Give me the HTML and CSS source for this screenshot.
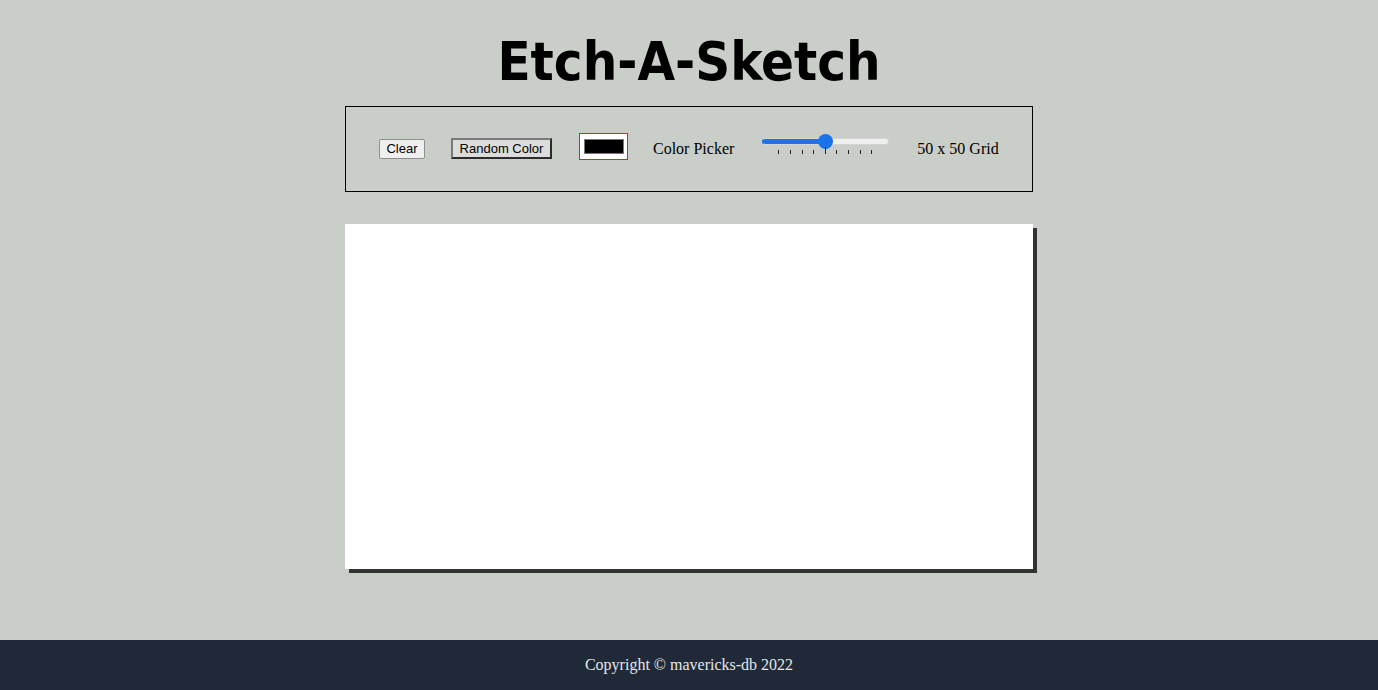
FILE: index.html
```html
<!DOCTYPE html>
<html lang="en">
<head>
<meta charset="utf-8">
<title>Etch-A-Sketch</title>
<link rel="stylesheet" href="styles.css">
</head>
<body>
<main class="page">
  <h1 class="title">Etch-A-Sketch</h1>
  <section class="controls">
    <button class="btn btn-clear" type="button">Clear</button>
    <button class="btn btn-random" type="button">Random Color</button>
    <span class="color-frame"><input class="color-input" type="color" value="#000000" aria-label="Color Picker"></span>
    <span class="label">Color Picker</span>
    <div class="slider">
      <input class="range" type="range" min="1" max="100" value="50" style="--fill: 50%" aria-label="Grid size">
      <div class="ticks">
        <span class="tick"></span><span class="tick"></span><span class="tick"></span><span class="tick"></span>
        <span class="tick tick-mid"></span>
        <span class="tick"></span><span class="tick"></span><span class="tick"></span><span class="tick"></span>
      </div>
    </div>
    <span class="label">50 x 50 Grid</span>
  </section>
  <div class="board"></div>
</main>
<footer class="footer">Copyright © mavericks-db 2022</footer>
</body>
</html>
```

FILE: styles.css
```css
* { box-sizing: border-box; }
html, body { margin: 0; padding: 0; }
body {
  background: #c9cec9;
  font-family: "Liberation Serif", "Times New Roman", serif;
  font-size: 16px;
  color: #000;
  min-height: 100vh;
  display: flex;
  flex-direction: column;
}
.page {
  flex: 1;
  display: flex;
  flex-direction: column;
  align-items: center;
}
.title {
  margin: 27px 0 0;
  font-family: "DejaVu Sans Condensed", "DejaVu Sans", Verdana, sans-serif;
  font-stretch: condensed;
  font-weight: bold;
  font-size: 54px;
  line-height: 70px;
  height: 79px;
}
.controls {
  width: 688px;
  height: 86px;
  border: 1px solid #000;
  display: flex;
  align-items: center;
  padding: 0 0 0 33px;
  gap: 0;
}
.btn {
  font-family: "Liberation Sans", Arial, sans-serif;
  font-size: 13px;
  color: #000;
  padding: 0;
  margin: 0;
  line-height: 15px;
  cursor: pointer;
}
.btn-clear {
  width: 46px;
  height: 20px;
  margin-top: -1px;
  background: #efefef;
  border: 1px solid #8f8f8f;
  border-radius: 2px;
}
.btn-random {
  width: 101px;
  height: 21px;
  margin-left: 26px;
  margin-top: -1px;
  background: #dcdcdc;
  border: 2px solid;
  border-color: #7a7a7a #2b2b2b #2b2b2b #7a7a7a;
  border-radius: 0;
}
.color-frame {
  display: block;
  width: 49px;
  height: 27px;
  margin: -6px 0 0 27px;
  padding: 5px 3px 5px 4px;
  background: #fff;
  border: 1px solid #c0302f;
}
.color-input {
  -webkit-appearance: none;
  appearance: none;
  display: block;
  width: 40px;
  height: 15px;
  margin: 0;
  padding: 0;
  border: 0;
  background: #777;
  cursor: pointer;
}
.color-input::-webkit-color-swatch-wrapper { padding: 0; }
.color-input::-webkit-color-swatch { border: 1px solid #777; border-radius: 0; }
.label {
  white-space: nowrap;
  margin-left: 25px;
}
.label + .slider { margin-left: 28px; }
.slider + .label { margin-left: 28px; }
.slider {
  position: relative;
  width: 127px;
  height: 22px;
  margin-top: -10px;
}
.range {
  -webkit-appearance: none;
  appearance: none;
  display: block;
  width: 127px;
  height: 16px;
  margin: 0;
  padding: 0;
  background: transparent;
}
.range::-webkit-slider-runnable-track {
  height: 7px;
  border-radius: 4px;
  background: linear-gradient(to right, #1a73e8 0 var(--fill), #efefef var(--fill) 100%);
  border: 1px solid #d4d4d4;
  border-left-color: #1a73e8;
}
.range::-webkit-slider-thumb {
  -webkit-appearance: none;
  width: 15px;
  height: 15px;
  border-radius: 50%;
  background: #1a73e8;
  margin-top: -5px;
}
.ticks {
  display: flex;
  justify-content: space-between;
  align-items: flex-end;
  width: 94px;
  margin-left: 16px;
  height: 7px;
  margin-top: -2px;
}
.tick {
  width: 1px;
  height: 4px;
  background: #222;
}
.tick-mid { height: 7px; }
.board {
  margin-top: 32px;
  width: 688px;
  height: 345px;
  background: #fff;
  box-shadow: 4px 4px 0 #333;
}
.footer {
  height: 50px;
  background: #1f2937;
  color: #e5e7eb;
  display: flex;
  align-items: center;
  justify-content: center;
}
```
